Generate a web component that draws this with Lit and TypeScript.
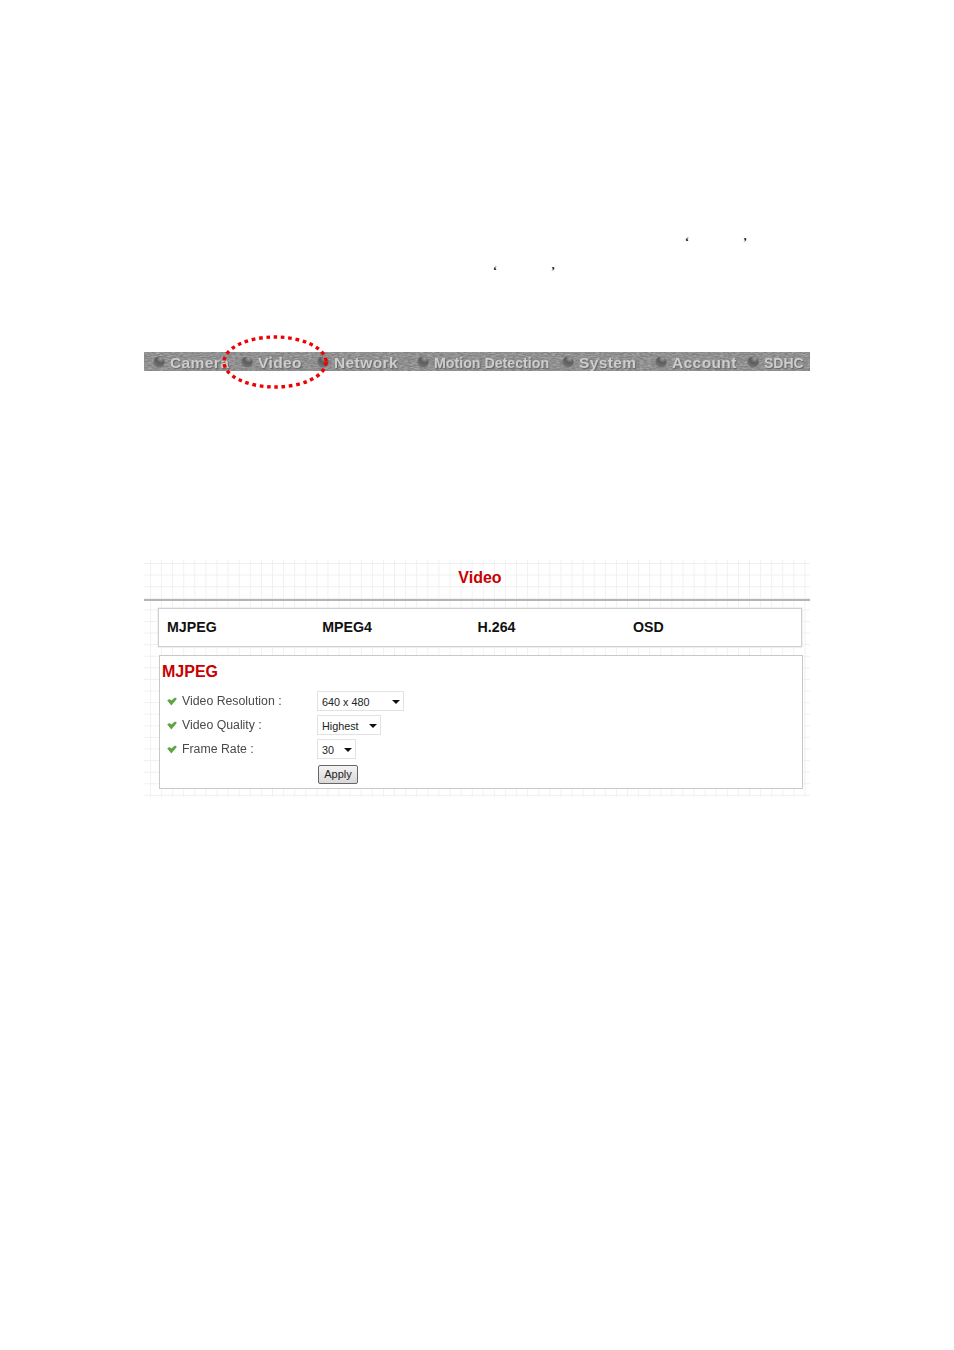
import { LitElement, html, css, svg } from "lit";
import { customElement } from "lit/decorators.js";

const NAV = [
  { t: "Camera", c: "" },
  { t: "Video", c: "" },
  { t: "Network", c: "" },
  { t: "Motion Detection", c: "tight" },
  { t: "System", c: "" },
  { t: "Account", c: "" },
  { t: "SDHC", c: "tight small" },
];
const TABS = ["MJPEG", "MPEG4", "H.264", "OSD"];
const ROWS = [
  { label: "Video Resolution :", value: "640 x 480", cls: "w87" },
  { label: "Video Quality :", value: "Highest", cls: "w64" },
  { label: "Frame Rate :", value: "30", cls: "w39" },
];

const check = svg`<svg class="check" viewBox="0 0 10 9" width="10" height="9"><path d="M0.2 3.4 L2.4 2 L4.4 3.6 L8 0.4 L9.9 1.8 L4.4 8.4 Z" fill="#5fa544"/></svg>`;
const bullet = svg`<svg class="bullet" viewBox="0 0 12 12" width="12" height="12"><defs><radialGradient id="b" cx="0.65" cy="0.2" r="0.85"><stop offset="0" stop-color="#a0a0a0"/><stop offset="0.45" stop-color="#5c5c5c"/><stop offset="1" stop-color="#7a7a7a"/></radialGradient></defs><circle cx="6" cy="6" r="5.6" fill="url(#b)"/></svg>`;

@customElement("app-root")
export class AppRoot extends LitElement {
  static styles = css`
    :host { display: block; }
    .page {
      width: 954px; height: 1350px; background: #fff; box-sizing: border-box;
      padding-top: 236px; font-family: "Liberation Sans", Arial, sans-serif; overflow: hidden;
    }
    .quotes {
      display: flex; height: 29px; font: bold 12px/12px "Liberation Serif", serif; color: #111;
    }
    .q1 { padding-left: 685px; gap: 54px; }
    .q2 { padding-left: 493px; gap: 54px; }
    .shot { margin: 58px 0 0 144px; width: 666px; position: relative; }
    .nav {
      position: relative; height: 19px; overflow: hidden; background: #7d7d7d;
      display: grid; grid-template-columns: 88px 76px 100px 145px 93px 92px 63px;
      padding-left: 9px; align-items: center;
    }
    .noise { position: absolute; inset: 0; width: 100%; height: 100%; }
    .item { position: relative; display: flex; align-items: center; gap: 5px; white-space: nowrap; }
    .bullet { flex: none; }
    .lbl {
      font-size: 15.5px; font-weight: bold; color: #cdcdcd; letter-spacing: 0.4px; padding-top: 2px;
      text-shadow: 1px 1px 1px #666; filter: blur(0.45px);
    }
    .tight .lbl { font-size: 14.2px; letter-spacing: 0; }
    .small .lbl { font-size: 14px; }
    .ring { position: absolute; left: 78px; top: -17px; pointer-events: none; }
    .panel {
      margin-top: 189px; height: 237px; box-sizing: border-box; position: relative;
      background-image:
        linear-gradient(to right, #f0f0f0 1px, transparent 1px),
        linear-gradient(to bottom, #f0f0f0 1px, transparent 1px);
      background-size: 11.1px 11.6px; background-position: 6px 3px;
      display: flex; flex-direction: column;
    }
    h1 {
      margin: 0; height: 39px; font-size: 16px; line-height: 35px; font-weight: bold;
      color: #c80000; text-align: center; padding-left: 6px; box-sizing: border-box;
    }
    .rule { height: 2px; background: #b4b4b4; }
    .tabs {
      margin: 7px 8px 0 14px; height: 39px; box-sizing: border-box; background: #fff;
      border: 1px solid #d0d0d0; box-shadow: 0 0 0 0.5px #e2e2e2;
      display: grid; grid-template-columns: repeat(4, 155.3px); align-items: center; padding: 0 0 2px 8px;
      font-size: 14.2px; font-weight: bold; color: #111;
    }
    .form {
      margin: 8px 7px 0 15px; height: 134px; box-sizing: border-box; background: #fff;
      border: 1px solid #c8c8c8; padding: 6px 0 0 2px;
    }
    h2 { margin: 0 0 7px; font-size: 16px; line-height: 20px; font-weight: bold; color: #c80000; }
    .row { display: flex; align-items: center; height: 24px; padding-left: 5px; }
    .row.last { padding-left: 156px; height: 22px; margin-top: 2px; }
    .check { flex: none; margin-right: 5px; }
    .name { width: 135px; font-size: 12.3px; color: #4a4a4a; white-space: nowrap; filter: blur(0.25px); }
    .sel {
      height: 20px; box-sizing: border-box; border: 1px solid #e2e2e2; background: #fff;
      display: flex; align-items: center; justify-content: space-between; padding: 1px 3px 0 4px;
      font-size: 10.8px; color: #222;
    }
    .w87 { width: 87px; }
    .w64 { width: 64px; }
    .w39 { width: 39px; }
    .arrow { width: 0; height: 0; border: 4px solid transparent; border-top: 4px solid #111; border-bottom: 0; }
    button {
      width: 40px; height: 19px; margin: 0; padding: 0; font: 11px "Liberation Sans", sans-serif; color: #222;
      background: linear-gradient(#f4f4f4, #d8d8d8); border: 1px solid #666; border-radius: 2px;
    }
  `;

  render() {
    return html`<div class="page">
      <div class="quotes q1"><span>‘</span><span>’</span></div>
      <div class="quotes q2"><span>‘</span><span>’</span></div>
      <div class="shot">
        <div class="nav">
          <svg class="noise" preserveAspectRatio="none">
            <filter id="n"><feTurbulence type="fractalNoise" baseFrequency="0.25 0.9" numOctaves="2" seed="4"/><feColorMatrix values="0 0 0 0 0.68 0 0 0 0 0.68 0 0 0 0 0.68 2 0 0 0 -0.7"/></filter>
            <filter id="m"><feTurbulence type="fractalNoise" baseFrequency="0.25 0.9" numOctaves="2" seed="9"/><feColorMatrix values="0 0 0 0 0.32 0 0 0 0 0.32 0 0 0 0 0.32 2 0 0 0 -0.7"/></filter>
            <rect width="100%" height="100%" fill="#808080"/>
            <rect width="100%" height="100%" filter="url(#n)" opacity="0.55"/>
            <rect width="100%" height="100%" filter="url(#m)" opacity="0.55"/>
          </svg>
          ${NAV.map((n) => html`<div class="item ${n.c}">${bullet}<span class="lbl">${n.t}</span></div>`)}
        </div>
        <svg class="ring" width="106" height="54" viewBox="0 0 106 54">
          <ellipse cx="53" cy="27" rx="51" ry="25" fill="none" stroke="#f00000" stroke-width="3.4" stroke-dasharray="3.6 3.7"/>
        </svg>
        <div class="panel">
          <h1>Video</h1>
          <div class="rule"></div>
          <div class="tabs">${TABS.map((t) => html`<span>${t}</span>`)}</div>
          <div class="form">
            <h2>MJPEG</h2>
            ${ROWS.map(
              (r) => html`<div class="row">${check}<span class="name">${r.label}</span>
                <div class="sel ${r.cls}"><span>${r.value}</span><span class="arrow"></span></div></div>`
            )}
            <div class="row last"><button>Apply</button></div>
          </div>
        </div>
      </div>
    </div>`;
  }
}
